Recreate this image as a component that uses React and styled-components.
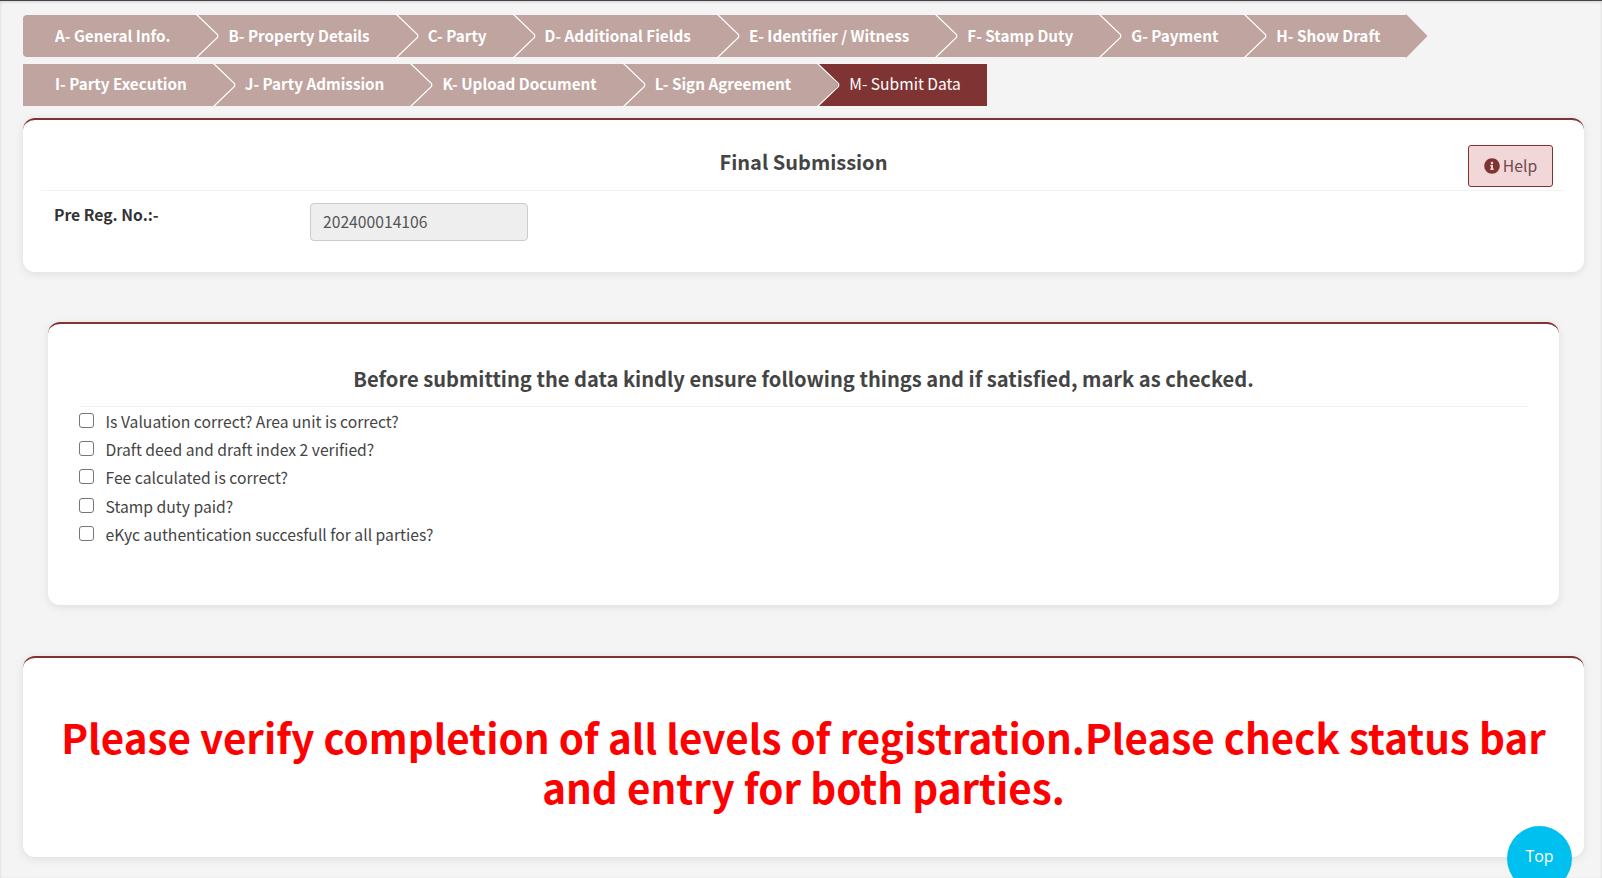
import React from "react";
import styled, { createGlobalStyle } from "styled-components";
import { FaInfoCircle } from "react-icons/fa";

const FONT = `"Noto Sans CJK SC", "Open Sans", sans-serif`;
const TAB = "#bfa4a0";
const MAROON = "#7f3333";

const Global = createGlobalStyle`
  html, body { margin: 0; padding: 0; height: 100%; overflow: hidden; background: #f4f4f4; }
  body { font-family: ${FONT}; color: #444; }
  * { box-sizing: border-box; }
`;

const Page = styled.div`
  height: 878px;
  overflow: hidden;
  border-top: 1px solid #444;
  box-shadow: inset 0 1px 3px rgba(0, 0, 0, 0.15);
  padding: 14px 18px 0 23px;
`;

const Tabs = styled.ul`
  list-style: none;
  margin: 0 0 12px;
  padding: 0;
  display: flex;
  flex-wrap: wrap;
  row-gap: 7px;
`;

const Tab = styled.li`
  position: relative;
  height: 42px;
  padding: 0 26px ${(p) => (p.$upper ? 1 : 3)}px 32px;
  display: flex;
  align-items: center;
  background: ${(p) => (p.$active ? MAROON : TAB)};
  color: #fff;
  font-size: ${(p) => (p.$active ? 15.6 : 15.25)}px;
  font-weight: ${(p) => (p.$active ? 400 : 700)};
  line-height: 39px;
  white-space: nowrap;
  border-radius: ${(p) => (p.$first ? "4px 0 0 4px" : 0)};
  z-index: ${(p) => p.$z};
`;

const Arrow = styled.svg`
  position: absolute;
  left: 100%;
  top: -1px;
  width: 24px;
  height: 44px;
  overflow: visible;
`;

const Card = styled.section`
  background: #fff;
  border-top: 2px solid ${MAROON};
  border-radius: 12px;
  box-shadow: 0 2px 10px rgba(0, 0, 0, 0.09);
  margin: ${(p) => p.$margin};
  padding: ${(p) => p.$padding};
  height: ${(p) => p.$height}px;
`;

const HeadRow = styled.div`
  position: relative;
  height: 71px;
  border-bottom: 1px solid #f2f2f2;
  display: flex;
  justify-content: center;
  padding: 24px 0 0 1px;
  margin-bottom: 12px;
`;

const Title = styled.h3`
  margin: 0;
  font-size: 20px;
  font-weight: 700;
  line-height: 36px;
  color: #444;
`;

const HelpButton = styled.button`
  position: absolute;
  right: 12px;
  top: 25px;
  width: 85px;
  height: 42px;
  display: flex;
  align-items: center;
  justify-content: center;
  gap: 3px;
  background: #f2d7d9;
  border: 1px solid ${MAROON};
  border-radius: 3px;
  color: #6f4a4a;
  font-family: ${FONT};
  font-size: 15.7px;
  line-height: 38px;
  padding: 0 0 1px;
  svg { color: ${MAROON}; width: 16px; height: 16px; margin-top: 1px; }
`;

const FieldRow = styled.div`
  display: flex;
  align-items: flex-start;
  padding-left: 13px;
`;

const FieldLabel = styled.label`
  width: 256px;
  font-size: 15.7px;
  font-weight: 700;
  color: #333;
  line-height: 24px;
`;

const ReadOnly = styled.input`
  width: 218px;
  height: 38px;
  background: #eee;
  border: 1px solid #ccc;
  border-radius: 4px;
  padding: 0 12px 2px;
  font-family: ${FONT};
  font-size: 15.7px;
  color: #555;
  outline: none;
`;

const CheckHeading = styled.div`
  height: 83px;
  border-bottom: 1px solid #f2f2f2;
  text-align: center;
  font-size: 20.13px;
  font-weight: 700;
  line-height: 36px;
  padding-top: 37px;
  color: #444;
`;

const CheckList = styled.div`
  display: flex;
  flex-direction: column;
`;

const CheckRow = styled.label`
  height: 28.2px;
  display: flex;
  align-items: flex-start;
  gap: 11.5px;
  font-size: 15.7px;
  line-height: 30px;
  color: #444;
  input {
    appearance: none;
    width: 15px;
    height: 15px;
    margin: 6px 0 0;
    border: 1px solid #767676;
    border-radius: 3px;
    background: #fff;
    flex: none;
  }
`;

const Warning = styled.h1`
  margin: 0;
  font-size: 40.33px;
  font-weight: 700;
  line-height: 50px;
  color: #f00;
  text-align: center;
`;

const TopButton = styled.button`
  position: fixed;
  left: 1507px;
  top: 826px;
  width: 65px;
  height: 65px;
  border-radius: 50%;
  border: none;
  background: #00c0ef;
  color: #fff;
  font-family: "Open Sans", sans-serif;
  font-size: 16px;
  padding: 0 0 6px;
`;

const row = [
  "A- General Info.", "B- Property Details", "C- Party", "D- Additional Fields",
  "E- Identifier / Witness", "F- Stamp Duty", "G- Payment", "H- Show Draft",
  "I- Party Execution", "J- Party Admission", "K- Upload Document", "L- Sign Agreement",
];

const checks = [
  "Is Valuation correct? Area unit is correct?",
  "Draft deed and draft index 2 verified?",
  "Fee calculated is correct?",
  "Stamp duty paid?",
  "eKyc authentication succesfull for all parties?",
];

export default function App() {
  return (
    <>
      <Global />
      <Page>
        <Tabs>
          {row.map((t, i) => (
            <Tab key={t} $first={i === 0} $upper={i < 8} $z={50 - i}>
              {t}
              <Arrow viewBox="0 0 24 44">
                <path d="M0 0 L21.5 22 L0 44 Z" fill={TAB} stroke="none" />
                <path
                  d="M0 0 L21.5 20.5 Q22 22 21.5 23.5 L0 44"
                  fill="none"
                  stroke={i === 7 ? "none" : "#fff"}
                  strokeWidth="1.2"
                />
              </Arrow>
            </Tab>
          ))}
          <Tab $active $z={1}>M- Submit Data</Tab>
        </Tabs>

        <Card $margin="0" $padding="0 19px 0 18px" $height={154}>
          <HeadRow>
            <Title>Final Submission</Title>
            <HelpButton>
              <FaInfoCircle />
              Help
            </HelpButton>
          </HeadRow>
          <FieldRow>
            <FieldLabel>Pre Reg. No.:-</FieldLabel>
            <ReadOnly readOnly value="202400014106" />
          </FieldRow>
        </Card>

        <Card $margin="50px 25px 0" $padding="0 31px" $height={283}>
          <CheckHeading>Before submitting the data kindly ensure following things and if satisfied, mark as checked.</CheckHeading>
          <CheckList>
            {checks.map((c) => (
              <CheckRow key={c}>
                <input type="checkbox" />
                {c}
              </CheckRow>
            ))}
          </CheckList>
        </Card>

        <Card $margin="51px 0 0" $padding="54px 30px 0" $height={201}>
          <Warning>Please verify completion of all levels of registration.Please check status bar and entry for both parties.</Warning>
        </Card>
      </Page>
      <TopButton>Top</TopButton>
    </>
  );
}
